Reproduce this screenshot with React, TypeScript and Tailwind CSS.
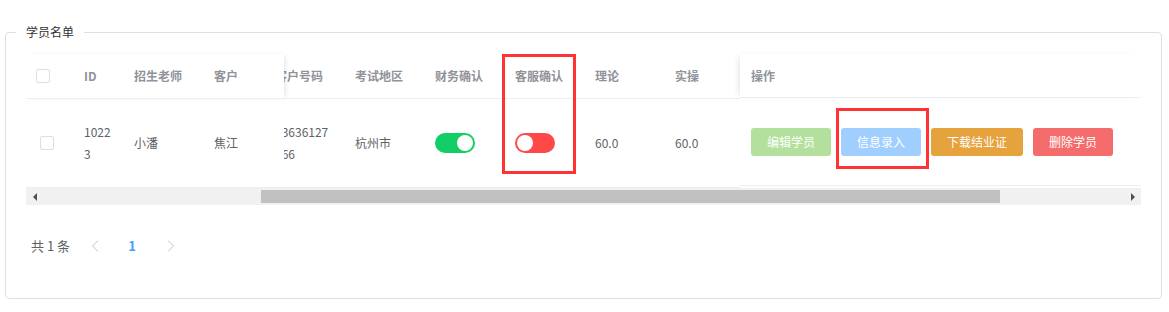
import React from "react";
import { ChevronLeft, ChevronRight } from "lucide-react";

const FONT = { fontFamily: '"Noto Sans CJK SC", "Noto Sans", sans-serif' };

function Checkbox() {
  return <div className="w-[14px] h-[14px] border border-[#dcdfe6] rounded-[2px] bg-white" />;
}

function Switch({ on }: { on: boolean }) {
  return on ? (
    <div className="w-[40px] h-[20px] rounded-full bg-[#13ce66] flex items-center justify-end px-[2px]">
      <div className="w-[16px] h-[16px] rounded-full bg-white" />
    </div>
  ) : (
    <div className="w-[40px] h-[20px] rounded-full bg-[#ff4949] flex items-center justify-start px-[2px]">
      <div className="w-[16px] h-[16px] rounded-full bg-white" />
    </div>
  );
}

const th = "h-[44px] flex items-center px-[10px] text-[12px] font-bold text-[#909399]";
const td = "h-[88px] flex items-center px-[10px] text-[12px] leading-[22px] text-[#606266]";

export default function App() {
  return (
    <div className="w-[1169px] h-[312px] bg-white relative pt-[32px] pl-[5px]" style={FONT}>
      <div className="w-[1157px] h-[267px] border border-[#dcdfe6] rounded-[4px] relative pt-[21px] pl-[20px]">
        <div className="absolute left-[10px] top-[-9px] px-[10px] bg-white text-[12px] leading-[16px] text-[#303133]">
          学员名单
        </div>

        <div className="w-[1115px]">
          <div className="flex">
            {/* fixed left */}
            <div className="w-[258px] relative z-10 bg-white">
              <div className="flex border-b border-[#ebeef5] bg-white shadow-[3px_0_5px_-2px_rgba(0,0,0,0.12)]">
                <div className="w-[48px] h-[44px] flex items-center pl-[10px]"><Checkbox /></div>
                <div className={`w-[50px] ${th}`}>ID</div>
                <div className={`w-[80px] ${th}`}>招生老师</div>
                <div className={`w-[80px] ${th}`}>客户</div>
              </div>
              <div className="flex border-b border-[#ebeef5]">
                <div className="w-[48px] h-[88px] flex items-center pl-[14px]"><Checkbox /></div>
                <div className={`w-[50px] ${td}`}><span>1022<br />3</span></div>
                <div className={`w-[80px] ${td}`}>小潘</div>
                <div className={`w-[80px] ${td}`}>焦江</div>
              </div>
            </div>

            {/* scrolled middle */}
            <div className="w-[456px] overflow-hidden">
              <div className="ml-[-19px] w-[480px]">
                <div className="flex border-b border-[#ebeef5]">
                  <div className={`w-[80px] shrink-0 ${th}`}>客户号码</div>
                  <div className={`w-[80px] shrink-0 ${th}`}>考试地区</div>
                  <div className={`w-[80px] shrink-0 ${th}`}>财务确认</div>
                  <div className={`w-[80px] shrink-0 ${th}`}>客服确认</div>
                  <div className={`w-[80px] shrink-0 ${th}`}>理论</div>
                  <div className={`w-[80px] shrink-0 ${th}`}>实操</div>
                </div>
                <div className="flex border-b border-[#ebeef5]">
                  <div className={`w-[80px] shrink-0 ${td}`}><span>13636127<br />766</span></div>
                  <div className={`w-[80px] shrink-0 ${td}`}>杭州市</div>
                  <div className={`w-[80px] shrink-0 ${td}`}><Switch on /></div>
                  <div className={`w-[80px] shrink-0 ${td}`}><Switch on={false} /></div>
                  <div className={`w-[80px] shrink-0 ${td}`}>60.0</div>
                  <div className={`w-[80px] shrink-0 ${td}`}>60.0</div>
                </div>
              </div>
            </div>

            {/* fixed right */}
            <div className="w-[401px] relative z-10 bg-white">
              <div className="h-[44px] flex items-center pl-[11px] text-[12px] font-bold text-[#909399] border-b border-[#ebeef5] bg-white shadow-[-4px_0_6px_-3px_rgba(0,0,0,0.12)]">
                操作
              </div>
              <div className="h-[88px] flex items-center pl-[11px] gap-[10px] border-b border-[#ebeef5]">
                <div className="w-[80px] h-[28px] rounded-[3px] bg-[#b3e19d] text-white text-[12px] flex items-center justify-center">编辑学员</div>
                <div className="w-[80px] h-[28px] rounded-[3px] bg-[#a0cfff] text-white text-[12px] flex items-center justify-center">信息录入</div>
                <div className="w-[92px] h-[28px] rounded-[3px] bg-[#e6a23c] text-white text-[12px] flex items-center justify-center">下载结业证</div>
                <div className="w-[80px] h-[28px] rounded-[3px] bg-[#f56c6c] text-white text-[12px] flex items-center justify-center">删除学员</div>
              </div>
            </div>
          </div>

          {/* scrollbar */}
          <div className="h-[17px] bg-[#f1f1f1] flex items-center">
            <div className="w-[17px] h-[17px] flex items-center justify-center">
              <div className="w-0 h-0 border-y-[4px] border-y-transparent border-r-[4px] border-r-[#505050]" />
            </div>
            <div className="w-[218px]" />
            <div className="w-[739px] h-[13px] bg-[#c1c1c1]" />
            <div className="flex-1" />
            <div className="w-[17px] h-[17px] flex items-center justify-center">
              <div className="w-0 h-0 border-y-[4px] border-y-transparent border-l-[4px] border-l-[#505050]" />
            </div>
          </div>

          {/* pagination */}
          <div className="mt-[27px] h-[28px] flex items-center pl-[5px] text-[13px] text-[#606266]">
            <span>共 1 条</span>
            <div className="ml-[10px] w-[30px] h-[28px] flex items-center justify-center text-[#c0c4cc]">
              <ChevronLeft size={20} strokeWidth={1.2} />
            </div>
            <div className="ml-[4px] w-[36px] h-[28px] flex items-center justify-center font-semibold text-[#409eff]">1</div>
            <div className="ml-[6px] w-[30px] h-[28px] flex items-center justify-center text-[#c0c4cc]">
              <ChevronRight size={20} strokeWidth={1.2} />
            </div>
          </div>
        </div>
      </div>

      {/* red highlight boxes */}
      <div className="absolute left-[502px] top-[54px] w-[74px] h-[120px] border-[3px] border-[#ff3333] z-20" />
      <div className="absolute left-[836px] top-[108px] w-[93px] h-[61px] border-[3px] border-[#ff3333] z-20" />
    </div>
  );
}
